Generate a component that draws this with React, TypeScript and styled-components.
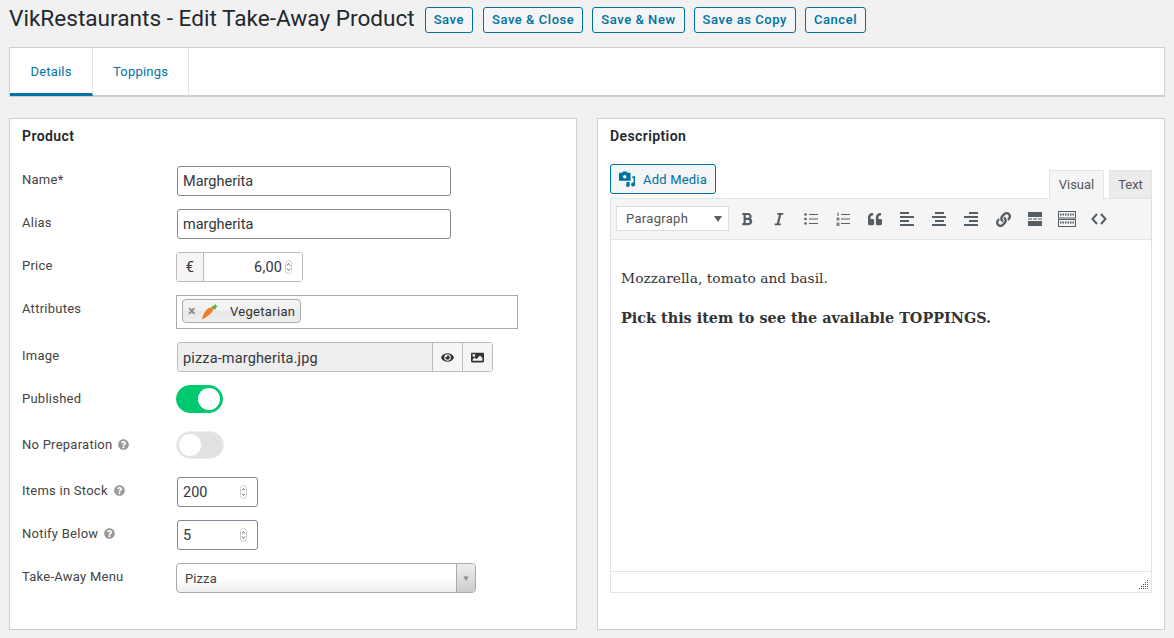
import React from 'react';
import styled, { createGlobalStyle } from 'styled-components';
import { FaBold, FaEye, FaImage, FaItalic, FaLink, FaQuestionCircle, FaQuoteLeft } from 'react-icons/fa';

const GlobalStyle = createGlobalStyle`
  html, body {
    margin: 0;
    padding: 0;
    background: #f1f1f1;
  }
  body {
    font-family: Roboto, "Liberation Sans", sans-serif;
    font-size: 13px;
    color: #444;
  }
`

const Page = styled.div`
  width: 1174px;
  height: 638px;
  box-sizing: border-box;
  padding: 0 9px;
  overflow: hidden;
`

const TitleBar = styled.div`
  display: flex;
  align-items: center;
  height: 47px;
  padding-bottom: 8px;
  box-sizing: border-box;
`

const Title = styled.h1`
  margin: 0 10px 2px 0;
  font-size: 22.6px;
  font-weight: 400;
  color: #23282d;
  white-space: nowrap;
`

const ActionButton = styled.button`
  box-sizing: border-box;
  height: 26px;
  margin-right: 9px;
  padding: 0 8px;
  border: 1px solid #0071a1;
  border-radius: 3px;
  background: #f3f5f6;
  color: #0071a1;
  font-family: inherit;
  font-size: 13px;
  font-weight: 500;
  letter-spacing: 0.55px;
  white-space: nowrap;
  &:first-of-type {
    margin-right: 10px;
  }
`

const TabBar = styled.div`
  display: flex;
  height: 50px;
  box-sizing: border-box;
  background: #fff;
  border: 1px solid #ccd0d4;
  border-bottom-width: 2px;
`

const Tab = styled.div<{ $active?: boolean; $width: number }>`
  display: flex;
  align-items: center;
  justify-content: center;
  box-sizing: border-box;
  width: ${p => p.$width}px;
  padding-top: 2px;
  border-right: 1px solid #e5e5e5;
  border-bottom: 3px solid ${p => (p.$active ? '#0073aa' : 'transparent')};
  margin-bottom: -1px;
  color: #0073aa;
  font-size: 13px;
  letter-spacing: 0.2px;
`

const Columns = styled.div`
  display: grid;
  grid-template-columns: 568px 568px;
  gap: 20px;
  margin-top: 21px;
`

const Panel = styled.section`
  box-sizing: border-box;
  height: 512px;
  padding: 10px 12px 0;
  background: #fff;
  border: 1px solid #ccd0d4;
`

const PanelTitle = styled.h3`
  margin: 0 0 23px;
  font-size: 14px;
  line-height: 14px;
  font-weight: 600;
  letter-spacing: 0.4px;
  color: #23282d;
`

const Row = styled.div<{ $gap?: number }>`
  display: flex;
  align-items: flex-start;
  margin-bottom: ${p => p.$gap ?? 13}px;
`

const Label = styled.div`
  display: flex;
  align-items: center;
  gap: 6px;
  flex: 0 0 154px;
  padding-top: 6px;
  line-height: 15px;
  font-size: 13px;
  letter-spacing: 0.25px;
  color: #444;
  white-space: nowrap;
`

const HelpIcon = styled(FaQuestionCircle)`
  width: 11px;
  height: 11px;
  color: #999;
`

const Field = styled.div<{ $width: number }>`
  display: flex;
  align-items: center;
  justify-content: space-between;
  box-sizing: border-box;
  width: ${p => p.$width}px;
  height: 30px;
  margin-left: 1px;
  padding: 0 10px 0 5px;
  background: #fff;
  border: 1px solid #7e8993;
  border-radius: 3px;
  color: #32373c;
  font-size: 14.5px;
`

const Group = styled.div<{ $inset?: boolean }>`
  display: flex;
  box-sizing: border-box;
  height: 30px;
  margin-left: ${p => (p.$inset ? 1 : 0)}px;
  border: 1px solid #bbb;
  border-radius: 3px;
  font-size: 14.5px;
  letter-spacing: 0.15px;
  color: #32373c;
`

const Addon = styled.div<{ $width: number; $left?: boolean }>`
  display: flex;
  align-items: center;
  justify-content: center;
  width: ${p => p.$width}px;
  box-sizing: border-box;
  background: #f5f5f5;
  border-left: ${p => (p.$left ? '1px solid #bbb' : 'none')};
`

const PriceValue = styled.div`
  display: flex;
  align-items: center;
  justify-content: flex-end;
  gap: 3px;
  width: 99px;
  box-sizing: border-box;
  padding: 0 10px 0 0;
  border-left: 1px solid #bbb;
  background: #fff;
`

const ImageName = styled.div`
  display: flex;
  align-items: center;
  flex: 0 0 254px;
  box-sizing: border-box;
  padding: 2px 0 0 5px;
  background: #eee;
  border-radius: 3px 0 0 3px;
`

const TagBox = styled.div`
  display: flex;
  align-items: flex-start;
  box-sizing: border-box;
  width: 342px;
  height: 34px;
  padding: 3px 5px;
  background: #fff;
  border: 1px solid #aaa;
`

const Tag = styled.div`
  display: flex;
  align-items: center;
  box-sizing: border-box;
  height: 24px;
  padding: 0 5px;
  border: 1px solid #aaa;
  border-radius: 4px;
  background: linear-gradient(#f4f4f4 20%, #f0f0f0 50%, #e8e8e8 52%, #eee);
  color: #333;
  font-size: 13px;
  letter-spacing: 0.3px;
`

const TagRemove = styled.span`
  width: 9px;
  margin-right: 4px;
  color: #888;
  font-size: 14px;
  font-weight: 700;
`

const TagText = styled.span`
  margin-left: 12px;
`

const Toggle = styled.div<{ $on?: boolean }>`
  display: flex;
  justify-content: ${p => (p.$on ? 'flex-end' : 'flex-start')};
  box-sizing: border-box;
  width: ${p => (p.$on ? 47 : 48)}px;
  height: 28px;
  padding: 2px;
  border-radius: 14px;
  background: ${p => (p.$on ? '#00c96f' : '#e2e2e2')};
  border: 1px solid ${p => (p.$on ? '#00c96f' : '#eee')};
`

const ToggleKnob = styled.div`
  width: 22px;
  height: 22px;
  border-radius: 50%;
  background: #fff;
`

const SelectBox = styled.div`
  display: flex;
  box-sizing: border-box;
  width: 300px;
  height: 30px;
  border: 1px solid #aaa;
  border-radius: 4px;
  background: linear-gradient(#fff 50%, #eee);
  color: #444;
  font-size: 13px;
  letter-spacing: 0.1px;
`

const SelectText = styled.div`
  flex: 1;
  align-self: center;
  padding: 0 0 0 8px;
`

const SelectArrow = styled.div`
  display: flex;
  align-items: center;
  justify-content: center;
  width: 18px;
  border-left: 1px solid #aaa;
  background: linear-gradient(#eee, #ccc);
  border-radius: 0 3px 3px 0;
  color: #888;
  font-size: 8px;
`

const EditorTop = styled.div`
  display: flex;
  align-items: flex-end;
  justify-content: space-between;
  height: 34px;
  margin-top: -2px;
`

const MediaButton = styled.button`
  display: flex;
  align-items: center;
  gap: 8px;
  box-sizing: border-box;
  height: 30px;
  width: 106px;
  margin-bottom: 4px;
  padding: 0 8px;
  border: 1px solid #0071a1;
  border-radius: 3px;
  background: #f3f5f6;
  color: #0071a1;
  font-family: inherit;
  font-size: 13px;
  letter-spacing: 0.2px;
  white-space: nowrap;
`

const ModeTabs = styled.div`
  display: flex;
  gap: 5px;
`

const ModeTab = styled.div<{ $active?: boolean; $width: number }>`
  display: flex;
  align-items: center;
  justify-content: center;
  box-sizing: border-box;
  width: ${p => p.$width}px;
  height: 29px;
  margin-bottom: -1px;
  border: 1px solid #e2e4e7;
  border-bottom-color: ${p => (p.$active ? '#f5f5f5' : '#e2e4e7')};
  background: ${p => (p.$active ? '#f5f5f5' : '#ebebeb')};
  color: #555;
  font-size: 13px;
  position: relative;
`

const Editor = styled.div`
  display: flex;
  flex-direction: column;
  height: 395px;
  box-sizing: border-box;
  border: 1px solid #e2e4e7;
`

const Toolbar = styled.div`
  display: flex;
  align-items: center;
  height: 41px;
  flex: none;
  box-sizing: border-box;
  padding-left: 5px;
  background: #f5f5f5;
  border-bottom: 1px solid #e2e4e7;
  box-shadow: 0 1px 2px rgba(0, 0, 0, 0.08);
  color: #555d66;
`

const FormatSelect = styled.div`
  display: flex;
  align-items: center;
  justify-content: space-between;
  box-sizing: border-box;
  width: 113px;
  height: 25px;
  margin: 0 2px 1px 0;
  padding: 0 6px 1px 9px;
  background: #fff;
  border: 1px solid #ddd;
  color: #555;
  font-size: 13px;
  letter-spacing: 0.3px;
`

const Caret = styled.span`
  width: 0;
  height: 0;
  margin-top: 2px;
  border-left: 4px solid transparent;
  border-right: 4px solid transparent;
  border-top: 6px solid #555d66;
`

const ToolButton = styled.div`
  display: flex;
  align-items: center;
  justify-content: center;
  width: 32px;
  height: 28px;
  flex: none;
`

const Content = styled.div`
  flex: 1;
  padding: 28px 10px 0;
  background: #fff;
  font-family: "DejaVu Serif", "Liberation Serif", serif;
  line-height: 20px;
  color: #333;
`

const Paragraph = styled.p<{ $strong?: boolean }>`
  margin: 0 0 20px;
  font-size: ${p => (p.$strong ? 14.4 : 13.8)}px;
  font-weight: ${p => (p.$strong ? 700 : 400)};
`

const StatusBar = styled.div`
  display: flex;
  align-items: flex-end;
  justify-content: flex-end;
  flex: none;
  box-sizing: border-box;
  height: 21px;
  padding: 0 3px 3px 0;
  background: #fff;
  border-top: 1px solid #e2e4e7;
`

function Spinner() {
  return (
    <svg width="7" height="14" viewBox="0 0 7 14">
      <rect x="0.5" y="0.5" width="6" height="13" rx="3" fill="#fff" stroke="#ccc" />
      <path d="M2 5.500 3.500 3.500 5 5.500M2 8.500 3.500 10.500 5 8.500" fill="none" stroke="#555" strokeWidth="0.8" />
    </svg>
  )
}

function CarrotIcon() {
  return (
    <svg width="17" height="18" viewBox="0 0 18 18">
      <path d="M1 18C2 13 5 7 9 5.500c2-.7 4 1 3.600 3C12 11 6 15.500 1 18Z" fill="#ee7c2b" />
      <path d="M11 5.500 12.500 3 13.500 4 15.500 1 15.800 3.500 18 3.800 15 6 16.500 7 13.500 7.300Z" fill="#5fa845" />
    </svg>
  )
}

function MediaIcon() {
  return (
    <svg width="18" height="18" viewBox="0 0 18 18" fill="#0071a1">
      <path fillRule="evenodd" d="M1 2h2.500l1-1.500h4L9.500 2H12a1 1 0 0 1 1 1v7a1 1 0 0 1-1 1H1a1 1 0 0 1-1-1V3a1 1 0 0 1 1-1Zm5.500 2.500a2 2 0 1 0 0 4 2 2 0 0 0 0-4Z" />
      <path d="M15 6h3v9a2.200 2.200 0 1 1-1.600-2V8H15ZM8 12.500h4V16a2 2 0 1 1-1.500-1.900V14H8Z" />
    </svg>
  )
}

function BulletList() {
  return (
    <svg width="14" height="14" viewBox="0 0 14 14" fill="#555d66">
      <circle cx="1.500" cy="2.500" r="1.300" /><circle cx="1.500" cy="7" r="1.300" /><circle cx="1.500" cy="11.500" r="1.300" />
      <rect x="5" y="2" width="9" height="1" /><rect x="5" y="6.500" width="9" height="1" /><rect x="5" y="11" width="9" height="1" />
    </svg>
  )
}

function NumberList() {
  return (
    <svg width="14" height="14" viewBox="0 0 14 14" fill="#555d66">
      <rect x="1.500" y="0.500" width="1" height="3.500" /><rect x="0.500" y="5.500" width="3" height="3" opacity="0.75" /><rect x="0.500" y="10.500" width="3" height="3.500" opacity="0.75" />
      <rect x="5" y="2" width="9" height="1" /><rect x="5" y="6.500" width="9" height="1" /><rect x="5" y="11" width="9" height="1" />
    </svg>
  )
}

function AlignIcon({ side }: { side: 'left' | 'center' | 'right' }) {
  const x = side === 'left' ? 0 : side === 'center' ? 3 : 5
  return (
    <svg width="14" height="14" viewBox="0 0 14 14" fill="#555d66">
      <rect x={x} y="0" width="9" height="2" />
      <rect x="0" y="4" width="14" height="2" />
      <rect x={x} y="8" width="9" height="2" />
      <rect x="0" y="12" width="14" height="2" />
    </svg>
  )
}

function MoreIcon() {
  return (
    <svg width="14" height="14" viewBox="0 0 14 14" fill="#555d66">
      <rect x="0" y="0" width="14" height="5" />
      <rect x="0" y="6.500" width="4" height="1" /><rect x="5" y="6.500" width="4" height="1" /><rect x="10" y="6.500" width="4" height="1" />
      <rect x="0" y="9" width="14" height="5" />
    </svg>
  )
}

function KitchenSinkIcon() {
  return (
    <svg width="18" height="16" viewBox="0 0 18 16" fill="none" stroke="#555d66">
      <rect x="0.500" y="0.500" width="17" height="6.500" />
      <rect x="0.500" y="8.500" width="17" height="7" />
      <path d="M2 3.500h14M2 11.500h14" strokeDasharray="1.500 1" strokeWidth="2" />
    </svg>
  )
}

function CodeIcon() {
  return (
    <svg width="16" height="12" viewBox="0 0 16 12" fill="none" stroke="#555d66" strokeWidth="2">
      <path d="M6 1 1.500 6 6 11M10 1 14.500 6 10 11" />
    </svg>
  )
}

function ResizeGrip() {
  const dots = [[8, 0], [6, 2], [8, 2], [4, 4], [6, 4], [8, 4], [2, 6], [4, 6], [6, 6], [8, 6], [0, 8], [2, 8], [4, 8], [6, 8], [8, 8]]
  return (
    <svg width="9" height="9" viewBox="0 0 9 9" fill="#555">
      {dots.map(([x, y]) => <rect key={`${x}-${y}`} x={x} y={y} width="1" height="1" />)}
    </svg>
  )
}

const actions = ['Save', 'Save & Close', 'Save & New', 'Save as Copy', 'Cancel']

export default function App() {
  return (
    <Page>
      <GlobalStyle />
      <TitleBar>
        <Title>VikRestaurants - Edit Take-Away Product</Title>
        {actions.map(a => <ActionButton key={a}>{a}</ActionButton>)}
      </TitleBar>
      <TabBar>
        <Tab $active $width={83}>Details</Tab>
        <Tab $width={96}>Toppings</Tab>
      </TabBar>
      <Columns>
        <Panel>
          <PanelTitle>Product</PanelTitle>
          <Row>
            <Label>Name*</Label>
            <Field $width={274}>Margherita</Field>
          </Row>
          <Row>
            <Label>Alias</Label>
            <Field $width={274}>margherita</Field>
          </Row>
          <Row>
            <Label>Price</Label>
            <Group>
              <Addon $width={26}>€</Addon>
              <PriceValue>6,00 <Spinner /></PriceValue>
            </Group>
          </Row>
          <Row>
            <Label>Attributes</Label>
            <TagBox>
              <Tag>
                <TagRemove>×</TagRemove>
                <CarrotIcon />
                <TagText>Vegetarian</TagText>
              </Tag>
            </TagBox>
          </Row>
          <Row>
            <Label>Image</Label>
            <Group $inset>
              <ImageName>pizza-margherita.jpg</ImageName>
              <Addon $width={30} $left><FaEye size={13} color="#333" /></Addon>
              <Addon $width={30} $left><FaImage size={13} color="#333" /></Addon>
            </Group>
          </Row>
          <Row $gap={18}>
            <Label>Published</Label>
            <Toggle $on><ToggleKnob /></Toggle>
          </Row>
          <Row $gap={18}>
            <Label>No Preparation <HelpIcon /></Label>
            <Toggle><ToggleKnob /></Toggle>
          </Row>
          <Row>
            <Label>Items in Stock <HelpIcon /></Label>
            <Field $width={81}>200 <Spinner /></Field>
          </Row>
          <Row>
            <Label>Notify Below <HelpIcon /></Label>
            <Field $width={81}>5 <Spinner /></Field>
          </Row>
          <Row>
            <Label>Take-Away Menu</Label>
            <SelectBox>
              <SelectText>Pizza</SelectText>
              <SelectArrow>▼</SelectArrow>
            </SelectBox>
          </Row>
        </Panel>
        <Panel>
          <PanelTitle>Description</PanelTitle>
          <EditorTop>
            <MediaButton><MediaIcon /> Add Media</MediaButton>
            <ModeTabs>
              <ModeTab $active $width={55}>Visual</ModeTab>
              <ModeTab $width={43}>Text</ModeTab>
            </ModeTabs>
          </EditorTop>
          <Editor>
            <Toolbar>
              <FormatSelect>Paragraph <Caret /></FormatSelect>
              <ToolButton><FaBold size={14} /></ToolButton>
              <ToolButton><FaItalic size={14} /></ToolButton>
              <ToolButton><BulletList /></ToolButton>
              <ToolButton><NumberList /></ToolButton>
              <ToolButton><FaQuoteLeft size={14} /></ToolButton>
              <ToolButton><AlignIcon side="left" /></ToolButton>
              <ToolButton><AlignIcon side="center" /></ToolButton>
              <ToolButton><AlignIcon side="right" /></ToolButton>
              <ToolButton><FaLink size={15} /></ToolButton>
              <ToolButton><MoreIcon /></ToolButton>
              <ToolButton><KitchenSinkIcon /></ToolButton>
              <ToolButton><CodeIcon /></ToolButton>
            </Toolbar>
            <Content>
              <Paragraph>Mozzarella, tomato and basil.</Paragraph>
              <Paragraph $strong>Pick this item to see the available TOPPINGS.</Paragraph>
            </Content>
            <StatusBar><ResizeGrip /></StatusBar>
          </Editor>
        </Panel>
      </Columns>
    </Page>
  )
}
